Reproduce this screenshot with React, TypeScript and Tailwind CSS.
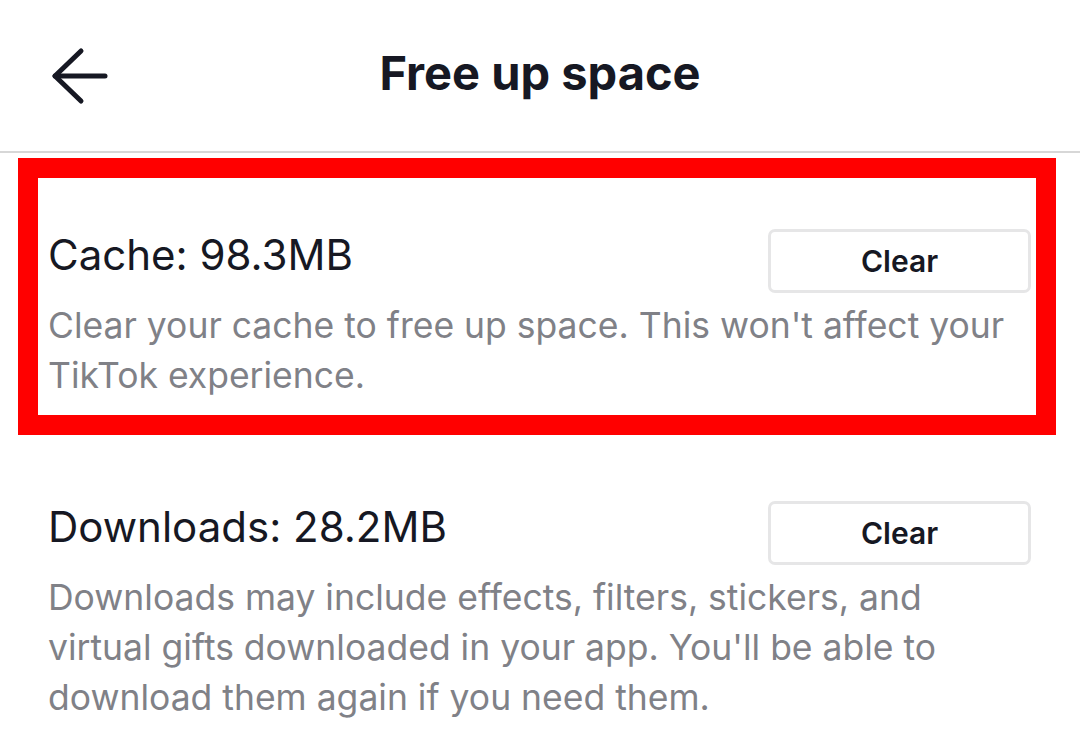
function BackArrow() {
  return (
    <svg width="60" height="60" viewBox="0 0 60 60" fill="none" stroke="#161823" strokeWidth="5" strokeLinecap="round" strokeLinejoin="round">
      <path d="M55 30H5" />
      <path d="M31 5L5 30L31 55" />
    </svg>
  )
}

function ClearButton() {
  return (
    <button className="mt-[3px] w-[263px] h-[64px] shrink-0 rounded-[7px] border-[3px] border-[#e6e6e7] bg-white text-[30px] font-semibold text-[#161823]">
      Clear
    </button>
  )
}

function StorageItem({ title, description }: { title: string; description: string }) {
  return (
    <div>
      <div className="flex items-start justify-between">
        <h2 className="text-[42px] leading-[58px] font-normal">{title}</h2>
        <ClearButton />
      </div>
      <p className="mt-[8px] text-[35.5px] leading-[50px] text-[#808187]">{description}</p>
    </div>
  )
}

export default function App() {
  return (
    <div className="w-[1080px] h-[750px] overflow-hidden bg-white text-[#161823] font-['Inter',sans-serif]">
      <header className="h-[153px] grid grid-cols-[1fr_auto_1fr] items-center border-b-2 border-[#d7d7d7]">
        <div className="pl-[50px] flex items-center">
          <BackArrow />
        </div>
        <h1 className="-mt-[4px] text-[47px] font-bold">Free up space</h1>
        <div />
      </header>

      <section className="mt-[5px] ml-[18px] mr-[24px] border-[20px] border-[#ff0000] pl-[10px] pr-[5px] pt-[48px] pb-[14px]">
        <StorageItem
          title="Cache: 98.3MB"
          description="Clear your cache to free up space. This won't affect your TikTok experience."
        />
      </section>

      <section className="mt-[63px] pl-[48px] pr-[49px]">
        <StorageItem
          title="Downloads: 28.2MB"
          description="Downloads may include effects, filters, stickers, and virtual gifts downloaded in your app. You'll be able to download them again if you need them."
        />
      </section>
    </div>
  )
}
